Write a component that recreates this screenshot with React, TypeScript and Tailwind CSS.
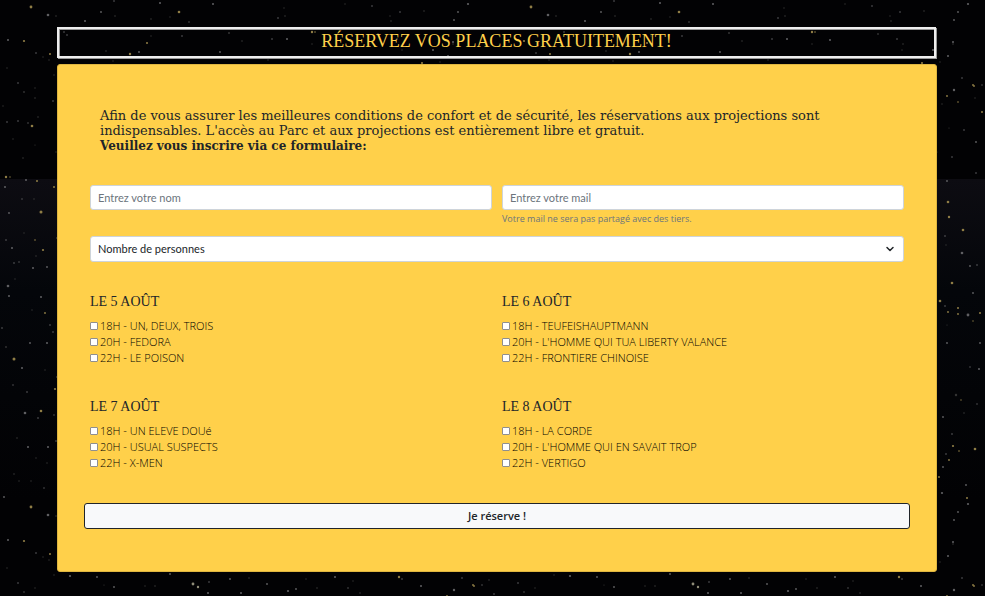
import { ChevronDown } from 'lucide-react';

type Star = [x: number, y: number, r: number, color: string];

const GOLD = '#8f7d45';
const GREY = '#5f5f62';
const DIM = '#333333';

const TILE = 500;

// Star positions inside one 500 × 500 tile of the night sky.
const STARS: Star[] = [
  [31, 7, 1.4, GOLD], [48, 15, 1.3, GREY], [56, 16, 0.8, DIM], [114, 1, 0.8, GREY], [160, 3, 1, GREY],
  [213, 4, 1, GREY], [179, 12, 1.3, GOLD], [101, 12, 0.9, GREY], [85, 21, 1, GREY], [115, 16, 0.8, DIM],
  [151, 19, 0.8, DIM], [170, 17, 0.7, DIM], [189, 22, 0.9, DIM], [285, 16, 0.8, DIM], [278, 18, 0.8, GREY],
  [284, 8, 0.7, DIM], [345, 4, 0.7, DIM], [372, 6, 0.8, GREY], [400, 12, 0.8, GREY], [390, 16, 0.7, DIM],
  [391, 21, 0.8, DIM], [454, 20, 0.9, GREY], [458, 12, 0.9, GREY], [468, 4, 1.1, GREY], [424, 11, 0.8, DIM],
  [8, 40, 1, GREY], [24, 41, 1.1, GOLD], [36, 53, 0.8, GREY], [50, 54, 1, GOLD], [43, 57, 0.7, DIM],
  [64, 32, 0.8, GREY], [67, 35, 0.8, GREY], [106, 51, 0.8, DIM], [130, 54, 1.2, GOLD], [139, 52, 0.9, GREY],
  [147, 43, 1, GOLD], [151, 36, 0.7, DIM], [182, 36, 0.8, GREY], [229, 33, 1, DIM], [242, 41, 0.8, DIM],
  [272, 39, 0.8, GREY], [220, 52, 0.9, GREY], [287, 39, 1, GREY], [312, 32, 1.2, GOLD], [315, 32, 0.8, GOLD],
  [330, 40, 1, GREY], [312, 44, 0.7, DIM], [378, 34, 0.9, DIM], [403, 44, 0.8, DIM], [397, 39, 0.8, GREY],
  [402, 50, 0.7, DIM], [433, 50, 1, GREY], [422, 63, 1.1, GOLD], [453, 42, 1, GREY], [440, 62, 0.7, DIM],
  [268, 60, 0.7, DIM], [113, 61, 0.7, DIM], [18, 83, 0.8, GREY], [7, 68, 0.7, DIM], [24, 92, 0.9, DIM],
  [35, 88, 0.7, DIM], [49, 60, 0.7, DIM], [54, 75, 0.7, DIM], [35, 98, 0.8, DIM], [53, 101, 0.8, GREY],
  [3, 106, 0.7, DIM], [38, 117, 0.8, DIM], [32, 126, 1.3, GOLD], [18, 121, 0.8, GREY], [7, 122, 0.8, GREY],
  [28, 123, 0.7, GREY], [13, 139, 0.7, DIM], [23, 158, 0.8, DIM], [56, 152, 0.7, DIM], [35, 145, 0.6, DIM],
  [6, 177, 1.2, GOLD], [10, 177, 0.7, GOLD], [26, 180, 1, GREY], [37, 181, 1, GOLD], [5, 187, 1, GREY],
  [54, 187, 1, GOLD], [22, 199, 0.7, GREY], [34, 199, 0.8, DIM], [41, 212, 1.5, GOLD], [9, 213, 0.9, GREY],
  [24, 233, 0.7, DIM], [6, 240, 0.8, GREY], [35, 240, 0.8, GOLD], [12, 248, 1, GREY], [43, 250, 1.1, GOLD],
  [57, 238, 0.8, GREY], [14, 263, 0.8, GREY], [19, 262, 0.7, GREY], [36, 256, 0.8, DIM], [33, 268, 1, GREY],
  [47, 267, 0.9, GREY], [15, 279, 0.7, DIM], [8, 286, 1.3, GREY], [9, 296, 1, GREY], [41, 297, 1, GREY],
  [45, 313, 0.9, GOLD], [32, 310, 0.7, DIM], [2, 328, 0.8, GREY], [53, 332, 0.8, GREY], [50, 325, 0.8, GREY],
  [30, 343, 0.9, GREY], [47, 343, 1, GREY], [6, 347, 0.9, DIM], [14, 359, 1.5, GOLD], [22, 368, 1, GREY],
  [45, 370, 0.7, DIM], [13, 385, 0.7, GREY], [27, 392, 0.8, GREY], [55, 389, 1.1, GOLD], [57, 377, 0.8, GREY],
  [25, 413, 1.3, GREY], [41, 411, 1.3, GOLD], [38, 418, 0.8, GREY], [54, 415, 0.9, DIM], [17, 438, 0.8, DIM],
  [28, 447, 1, GREY], [48, 447, 1, GREY], [56, 441, 0.8, GREY], [47, 463, 0.7, DIM], [36, 458, 0.7, DIM],
  [14, 474, 0.8, DIM], [4, 497, 0.9, GREY], [19, 481, 0.7, DIM], [31, 481, 0.7, DIM], [44, 488, 0.7, GREY],
  [462, 78, 0.8, GREY], [454, 90, 1.2, GREY], [447, 96, 0.9, GOLD], [473, 85, 0.9, GOLD], [482, 85, 0.7, GREY],
  [458, 102, 0.8, GOLD], [475, 98, 0.7, DIM], [442, 104, 0.7, DIM], [482, 112, 1, GOLD], [464, 130, 0.8, GREY],
  [449, 128, 0.6, DIM], [476, 142, 0.9, GREY], [452, 157, 0.8, GREY], [437, 152, 0.6, DIM], [476, 173, 0.8, GREY],
  [448, 202, 1.3, GOLD], [447, 181, 0.9, GREY], [449, 217, 1.2, GOLD], [463, 230, 1.3, GOLD], [445, 236, 0.8, GREY],
  [462, 253, 1.3, GREY], [470, 266, 0.9, GREY], [477, 265, 0.8, GREY], [452, 283, 1.3, GOLD], [446, 245, 0.7, DIM],
  [473, 293, 0.9, GREY], [440, 301, 1.3, GOLD], [445, 306, 0.8, GREY], [458, 308, 1, GOLD], [448, 312, 0.9, GOLD],
  [458, 314, 0.9, GOLD], [468, 315, 1.4, GREY], [480, 313, 1, GOLD], [473, 321, 0.7, GOLD], [447, 325, 0.6, DIM],
  [447, 343, 0.9, GREY], [480, 343, 0.9, GREY], [470, 367, 0.7, GREY], [479, 369, 1, GREY], [456, 395, 1.2, DIM],
  [461, 400, 0.7, GOLD], [477, 404, 0.7, GREY], [443, 417, 0.9, GREY], [464, 413, 0.8, DIM], [452, 434, 0.8, GREY],
  [453, 446, 1.1, GOLD], [475, 449, 1.3, GOLD], [459, 451, 0.8, GOLD], [446, 454, 0.8, GREY], [449, 460, 0.9, GOLD],
  [443, 467, 0.9, GREY], [439, 477, 0.9, GOLD], [466, 485, 0.9, GREY], [442, 493, 1.1, GREY], [467, 498, 1, GOLD],
  [448, 56, 1, GREY], [453, 44, 0.8, DIM], [70, 76, 1.1, GREY],
  [97, 77, 0.9, GREY], [114, 87, 0.9, GREY], [104, 85, 0.6, DIM], [145, 86, 0.7, DIM], [155, 86, 0.8, DIM],
  [170, 74, 0.9, GREY], [193, 84, 1.4, '#8f8c78'], [198, 87, 1.2, '#8f8c78'], [208, 93, 1, GREY], [209, 82, 0.8, GREY],
  [230, 79, 0.9, GREY], [241, 93, 1, GREY], [249, 78, 0.8, DIM], [267, 84, 0.9, GREY], [288, 91, 1.1, GREY],
  [296, 89, 0.9, GREY], [306, 79, 0.7, DIM], [317, 88, 0.8, DIM], [335, 77, 1, GREY], [348, 88, 0.7, GREY],
  [353, 81, 0.7, DIM], [360, 93, 0.8, DIM], [399, 77, 1.2, GOLD], [402, 79, 0.8, GREY], [421, 86, 1, GREY],
  [474, 86, 0.9, GOLD], [489, 80, 0.8, DIM], [494, 94, 0.8, GREY],
];

function NightSky() {
  return (
    <svg className="absolute inset-0 -z-10 h-full w-full" aria-hidden="true">
      <defs>
        <linearGradient id="haze" x1="0" y1="0" x2="0" y2="1">
          <stop offset="0" stopColor="#0d0c12" />
          <stop offset="0.35" stopColor="#04060a" />
          <stop offset="1" stopColor="#020204" />
        </linearGradient>
        <pattern id="sky" width={TILE} height={TILE} patternUnits="userSpaceOnUse">
          <rect width={TILE} height={TILE} fill="#020204" />
          <rect y="179" width={TILE} height="321" fill="url(#haze)" />
          {STARS.map(([x, y, r, color], i) => (
            <circle key={i} cx={x} cy={y} r={r} fill={color} />
          ))}
        </pattern>
      </defs>
      <rect width="100%" height="100%" fill="url(#sky)" />
    </svg>
  );
}

const DAYS = [
  { title: 'LE 5 AOÛT', films: ['18H - UN, DEUX, TROIS', '20H - FEDORA', '22H - LE POISON'] },
  {
    title: 'LE 6 AOÛT',
    films: ['18H - TEUFEISHAUPTMANN', "20H - L'HOMME QUI TUA LIBERTY VALANCE", '22H - FRONTIERE CHINOISE'],
  },
  { title: 'LE 7 AOÛT', films: ['18H - UN ELEVE DOUé', '20H - USUAL SUSPECTS', '22H - X-MEN'] },
  { title: 'LE 8 AOÛT', films: ['18H - LA CORDE', "20H - L'HOMME QUI EN SAVAIT TROP", '22H - VERTIGO'] },
];

const field =
  'block w-full rounded-[3px] border border-[#ced4da] bg-white px-[7px] font-[Lato,sans-serif] text-[11px] leading-4 outline-none placeholder:text-[#6c757d] placeholder:opacity-100';

export default function App() {
  return (
    <div className="relative isolate min-h-screen bg-black pt-[27px] pr-12 pb-6 pl-[57px] font-['Open_Sans',sans-serif] text-[11px] text-[#212529]">
      <NightSky />
      <h1 className="mr-px mb-[6px] border-2 border-[#eeeeee] pb-[3px] text-center font-['Liberation_Serif',serif] text-[18px] leading-6 text-[#ffd04a] shadow-[inset_1px_1px_0_#999999,1px_1px_0_#999999]">
        RÉSERVEZ VOS PLACES GRATUITEMENT!
      </h1>
      <form
        className="rounded-[3px] border border-[#dfb640] bg-[#ffd04a] px-[26px] pt-[43px] pb-[42px]"
        onSubmit={(event) => event.preventDefault()}
      >
        <p className="px-4 font-['DejaVu_Serif',serif] text-[13px] leading-[15px]">
          Afin de vous assurer les meilleures conditions de confort et de sécurité, les réservations aux projections
          sont indispensables. L'accès au Parc et aux projections est entièrement libre et gratuit.
          <br />
          <strong className="text-[12px]">Veuillez vous inscrire via ce formulaire:</strong>
        </p>

        <div className="mt-[31px] grid grid-cols-2 gap-x-[10px] px-1.5">
          <div>
            <input type="text" aria-label="Nom" placeholder="Entrez votre nom" className={`${field} h-[25px]`} />
          </div>
          <div>
            <input
              type="email"
              aria-label="Mail"
              aria-describedby="mail-help"
              placeholder="Entrez votre mail"
              className={`${field} h-[25px]`}
            />
            <small id="mail-help" className="mt-0.5 block text-[9px] leading-[14px] text-[#6c757d]">
              Votre mail ne sera pas partagé avec des tiers.
            </small>
          </div>
        </div>

        <div className="relative mx-1.5 mt-[10px]">
          <select aria-label="Nombre de personnes" className={`${field} h-[26px] appearance-none`}>
            <option>Nombre de personnes</option>
          </select>
          <ChevronDown className="pointer-events-none absolute top-[7px] right-2 size-3" strokeWidth={3} />
        </div>

        <div className="mt-[30px] grid grid-cols-2 gap-x-[10px] gap-y-[31px] px-1.5">
          {DAYS.map((day) => (
            <fieldset key={day.title}>
              <legend className="mb-[6px] font-['Liberation_Serif',serif] text-[14px] leading-5">{day.title}</legend>
              {day.films.map((film) => (
                <label key={film} className="flex items-center gap-0.5 leading-4 font-light text-black">
                  <input type="checkbox" className="size-2 appearance-none rounded-[1px] border border-[#8f8f8f] bg-white" />
                  {film}
                </label>
              ))}
            </fieldset>
          ))}
        </div>

        <button
          type="submit"
          className="mt-8 block h-[26px] w-full rounded-[3px] border border-[#212529] bg-[#f8f9fa] text-[11px] font-semibold text-[#212529]"
        >
          Je réserve !
        </button>
      </form>
    </div>
  );
}
